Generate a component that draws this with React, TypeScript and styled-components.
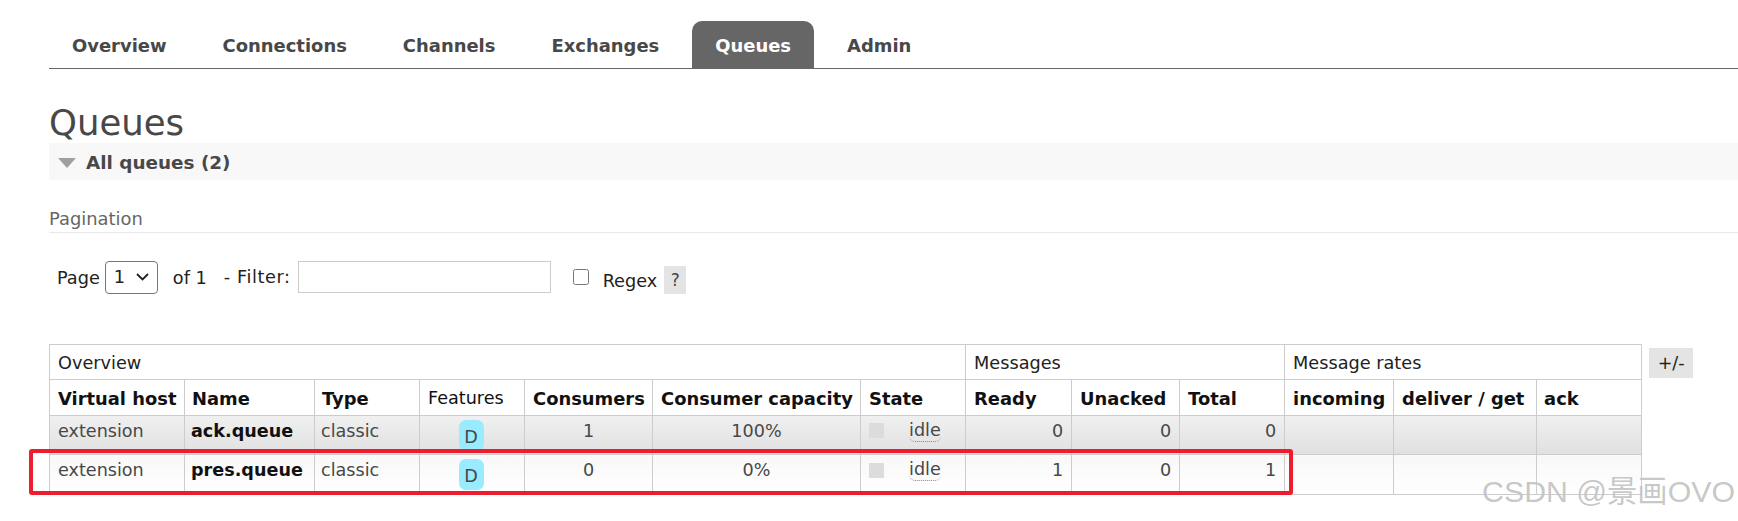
import React from "react";
import styled, { createGlobalStyle } from "styled-components";

const Global = createGlobalStyle`
  html, body { margin: 0; padding: 0; background: #fff; }
  body { font-family: "DejaVu Sans", Verdana, sans-serif; color: #484848; overflow: hidden; }
`;

const Page = styled.div`
  position: relative;
  width: 1738px;
  height: 521px;
  overflow: hidden;
  padding: 21px 0 0 49px;
  box-sizing: border-box;
`;

const Tabs = styled.nav`
  display: flex;
  gap: 10px;
  height: 47px;
  border-bottom: 1px solid #666;
  font-size: 17.95px;
  font-weight: 700;
`;

const Tab = styled.a<{ $active?: boolean }>`
  box-sizing: border-box;
  display: flex;
  align-items: center;
  height: 48px;
  padding: 1px 23px 0;
  border-radius: 10px 10px 0 0;
  color: ${(p) => (p.$active ? "#fff" : "#484848")};
  background: ${(p) => (p.$active ? "#666" : "transparent")};
`;

const Title = styled.h1`
  margin: 33px 0 0;
  height: 41px;
  font-size: 35.5px;
  line-height: 41px;
  font-weight: 400;
  color: #484848;
`;

const SectionBar = styled.div`
  height: 37px;
  box-sizing: border-box;
  padding: 2px 0 0 9px;
  background: #f8f8f8;
  display: flex;
  align-items: center;
  gap: 10px;
  font-size: 18.4px;
  font-weight: 700;
`;

const Arrow = styled.svg`
  width: 18px;
  height: 10px;
  fill: #a0a0a0;
`;

const SubHead = styled.div`
  margin-top: 28px;
  height: 24px;
  font-size: 17.9px;
  line-height: 22px;
  color: #666;
  border-bottom: 1px solid #e8e8e8;
`;

const FilterRow = styled.div`
  display: flex;
  align-items: center;
  height: 34px;
  margin-top: 28px;
  padding-left: 8px;
  font-size: 17.7px;
  color: #222;
`;

const Label = styled.span<{ $ml?: number; $lift?: number; $wide?: boolean }>`
  margin-left: ${(p) => p.$ml ?? 0}px;
  margin-bottom: ${(p) => p.$lift ?? 0}px;
  letter-spacing: ${(p) => (p.$wide ? "0.6px" : "0")};
  white-space: nowrap;
`;

const SelectBox = styled.div`
  position: relative;
  width: 53px;
  height: 33px;
  margin: 0 0 2px 5px;
`;

const PageSelect = styled.select`
  appearance: none;
  width: 100%;
  height: 100%;
  padding: 0 0 0 8px;
  font-family: inherit;
  font-size: 17.7px;
  color: #222;
  background: #fff;
  border: 1px solid #767676;
  border-radius: 4px;
`;

const Chevron = styled.svg`
  position: absolute;
  right: 9px;
  top: 12px;
  width: 13px;
  height: 8px;
  fill: none;
  stroke: #222;
  stroke-width: 1.8;
  pointer-events: none;
`;

const FilterInput = styled.input`
  width: 253px;
  height: 32px;
  box-sizing: border-box;
  margin: 0 0 2px 7px;
  border: 1px solid #ccc;
  background: #fff;
`;

const RegexBox = styled.input`
  width: 16px;
  height: 16px;
  margin: 0 0 3px 22px;
`;

const Help = styled.span`
  width: 22px;
  height: 28px;
  margin: 3px 0 0 7px;
  display: flex;
  align-items: center;
  justify-content: center;
  background: #e4e4e4;
  color: #484848;
  font-size: 17px;
`;

const TableWrap = styled.div`
  display: flex;
  align-items: flex-start;
  gap: 7px;
  margin-top: 49px;
`;

const Grid = styled.table`
  table-layout: fixed;
  width: 1592px;
  border-collapse: collapse;
`;

const Col = styled.col<{ $w: number }>`
  width: ${(p) => p.$w}px;
`;

const Group = styled.th`
  box-sizing: border-box;
  height: 35px;
  padding: 1px 8px 0;
  border: 1px solid #ccc;
  font-weight: 400;
  text-align: left;
  font-size: 17.7px;
  color: #222;
`;

const Head = styled.th<{ $plain?: boolean; $tight?: boolean }>`
  box-sizing: border-box;
  height: 36px;
  padding: 1px 8px 0 ${(p) => (p.$tight ? 7 : 8)}px;
  border: 1px solid #ccc;
  text-align: left;
  white-space: nowrap;
  color: #111;
  font-weight: ${(p) => (p.$plain ? 400 : 700)};
  font-size: ${(p) => (p.$plain ? "17.6px" : "17.9px")};
`;

const Row = styled.tr<{ $alt?: boolean }>`
  background: ${(p) =>
    p.$alt
      ? "linear-gradient(#f8f8f8, #ffffff)"
      : "linear-gradient(#f0f0f0, #e0e0e0)"};
`;

const Cell = styled.td<{ $align?: string; $strong?: boolean; $tight?: boolean; $h: number }>`
  box-sizing: border-box;
  height: ${(p) => p.$h}px;
  padding: 0 8px 9px ${(p) => (p.$tight ? 6 : 8)}px;
  border: 1px solid #ccc;
  white-space: nowrap;
  font-size: 17.6px;
  line-height: 22px;
  font-weight: ${(p) => (p.$strong ? 700 : 400)};
  color: ${(p) => (p.$strong ? "#111" : "#484848")};
  text-align: ${(p) => p.$align ?? "left"};
`;

const BadgeCell = styled.td<{ $h: number }>`
  box-sizing: border-box;
  height: ${(p) => p.$h}px;
  padding: 4px 2px 0 0;
  border: 1px solid #ccc;
  vertical-align: top;
`;

const FeatureBadge = styled.span`
  display: flex;
  align-items: center;
  justify-content: center;
  width: 25px;
  height: 31px;
  margin: 0 auto;
  border-radius: 7px;
  background: #99ebff;
  color: #484848;
  font-size: 17.6px;
  padding-top: 2px;
  box-sizing: border-box;
`;

const StateWrap = styled.div`
  display: flex;
  align-items: center;
  gap: 25px;
`;

const StateDot = styled.span`
  width: 15px;
  height: 15px;
  background: #dcdcdc;
`;

const StateText = styled.span`
  border-bottom: 1px dotted #888;
  border-radius: 0 0 6px 6px;
  line-height: 21px;
`;

const ToggleColumns = styled.div`
  width: 44px;
  height: 30px;
  margin-top: 4px;
  display: flex;
  align-items: center;
  justify-content: center;
  background: #e4e4e4;
  color: #222;
  font-size: 17.6px;
`;

const Highlight = styled.div`
  position: absolute;
  left: 29px;
  top: 449px;
  width: 1256px;
  height: 38px;
  border: 4px solid #ed1c2e;
  border-radius: 3px;
  box-sizing: content-box;
  pointer-events: none;
`;

const Watermark = styled.div`
  position: absolute;
  right: 3px;
  top: 474px;
  font-family: "Liberation Sans", "Noto Sans CJK SC", sans-serif;
  font-size: 30.3px;
  line-height: 36px;
  color: rgba(175, 175, 175, 0.7);
  text-shadow: 0 0 1px rgba(255, 255, 255, 0.8);
  white-space: nowrap;
  pointer-events: none;
`;

const tabs = [
  { label: "Overview" },
  { label: "Connections" },
  { label: "Channels" },
  { label: "Exchanges" },
  { label: "Queues", active: true },
  { label: "Admin" },
];

const widths = [135, 130, 105, 105, 128, 208, 105, 106, 108, 105, 109, 143, 105];

const queues = [
  { name: "ack.queue", consumers: "1", capacity: "100%", ready: "0", total: "0", h: 39, alt: false },
  { name: "pres.queue", consumers: "0", capacity: "0%", ready: "1", total: "1", h: 40, alt: true },
];

const heads: { t: string; plain?: boolean; tight?: boolean }[] = [
  { t: "Virtual host" },
  { t: "Name", tight: true },
  { t: "Type", tight: true },
  { t: "Features", plain: true },
  { t: "Consumers" },
  { t: "Consumer capacity" },
  { t: "State" },
  { t: "Ready" },
  { t: "Unacked" },
  { t: "Total" },
  { t: "incoming" },
  { t: "deliver / get" },
  { t: "ack", tight: true },
];

export default function App() {
  return (
    <Page>
      <Global />
      <Tabs>
        {tabs.map((t) => (
          <Tab key={t.label} $active={t.active}>
            {t.label}
          </Tab>
        ))}
      </Tabs>
      <Title>Queues</Title>
      <SectionBar>
        <Arrow viewBox="0 0 18 10">
          <path d="M0 0h18L9 10z" />
        </Arrow>
        All queues (2)
      </SectionBar>
      <SubHead>Pagination</SubHead>
      <FilterRow>
        <Label>Page</Label>
        <SelectBox>
          <PageSelect defaultValue="1">
            <option value="1">1</option>
          </PageSelect>
          <Chevron viewBox="0 0 13 8">
            <path d="M1 1l5.5 5.5L12 1" />
          </Chevron>
        </SelectBox>
        <Label $ml={15}>of 1</Label>
        <Label $ml={17} $lift={3} $wide>- Filter:</Label>
        <FilterInput type="text" />
        <RegexBox type="checkbox" />
        <Label $ml={14} $lift={-6}>Regex</Label>
        <Help>?</Help>
      </FilterRow>
      <TableWrap>
        <Grid>
          <colgroup>
            {widths.map((w, i) => (
              <Col key={i} $w={w} />
            ))}
          </colgroup>
          <thead>
            <tr>
              <Group colSpan={7}>Overview</Group>
              <Group colSpan={3}>Messages</Group>
              <Group colSpan={3}>Message rates</Group>
            </tr>
            <tr>
              {heads.map((h) => (
                <Head key={h.t} $plain={h.plain} $tight={h.tight}>
                  {h.t}
                </Head>
              ))}
            </tr>
          </thead>
          <tbody>
            {queues.map((q) => (
              <Row key={q.name} $alt={q.alt}>
                <Cell $h={q.h}>extension</Cell>
                <Cell $h={q.h} $strong $tight>{q.name}</Cell>
                <Cell $h={q.h} $tight>classic</Cell>
                <BadgeCell $h={q.h}>
                  <FeatureBadge>D</FeatureBadge>
                </BadgeCell>
                <Cell $h={q.h} $align="center">{q.consumers}</Cell>
                <Cell $h={q.h} $align="center">{q.capacity}</Cell>
                <Cell $h={q.h}>
                  <StateWrap>
                    <StateDot />
                    <StateText>idle</StateText>
                  </StateWrap>
                </Cell>
                <Cell $h={q.h} $align="right">{q.ready}</Cell>
                <Cell $h={q.h} $align="right">0</Cell>
                <Cell $h={q.h} $align="right">{q.total}</Cell>
                <Cell $h={q.h} />
                <Cell $h={q.h} />
                <Cell $h={q.h} />
              </Row>
            ))}
          </tbody>
        </Grid>
        <ToggleColumns>+/-</ToggleColumns>
      </TableWrap>
      <Highlight />
      <Watermark>CSDN @景画OVO</Watermark>
    </Page>
  );
}
